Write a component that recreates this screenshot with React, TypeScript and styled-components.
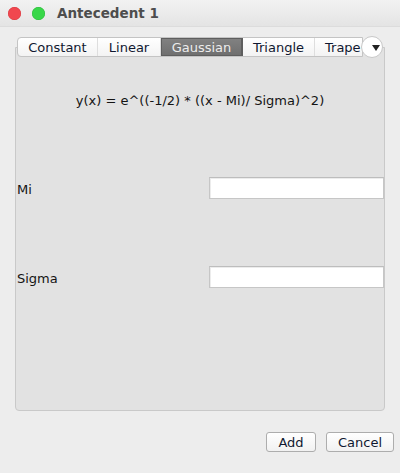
import React from "react";
import styled, { createGlobalStyle } from "styled-components";

const Global = createGlobalStyle`
  html, body { margin: 0; padding: 0; background: #ededed; }
  body { font-family: "DejaVu Sans", "Liberation Sans", sans-serif; }
  * { box-sizing: border-box; }
`;

const Window = styled.div`
  width: 400px;
  height: 473px;
  background: #ededed;
  display: flex;
  flex-direction: column;
  overflow: hidden;
`;

const TitleBar = styled.div`
  height: 27px;
  flex: none;
  display: flex;
  align-items: center;
  padding-left: 8px;
  gap: 11px;
  background: linear-gradient(#f2f2f2, #e4e4e4);
  border-bottom: 1px solid #dcdcdc;
`;

const Light = styled.span<{ $color: string; $edge: string }>`
  width: 13px;
  height: 13px;
  border-radius: 50%;
  background: ${(p) => p.$color};
  box-shadow: inset 0 0 0 0.5px ${(p) => p.$edge};
  flex: none;
`;

const Title = styled.div`
  margin-left: 1px;
  font-size: 13.5px;
  font-weight: bold;
  color: #4d4d4d;
`;

const Body = styled.div`
  flex: 1;
  display: flex;
  flex-direction: column;
  padding: 9px 15px 0 15px;
`;

const TabRow = styled.div`
  position: relative;
  z-index: 1;
  display: flex;
  align-items: center;
  height: 22px;
  margin-left: 2px;
  width: 368px;
`;

const Tabs = styled.div`
  display: flex;
  width: 346px;
  overflow: hidden;
  height: 20px;
  border: 1px solid #c4c4c4;
  border-radius: 4px 0 0 4px;
  background: linear-gradient(#ffffff, #f3f3f3);
`;

const Tab = styled.div<{ $active?: boolean; $w: number }>`
  flex: none;
  width: ${(p) => p.$w}px;
  height: 100%;
  display: flex;
  align-items: center;
  justify-content: center;
  white-space: nowrap;
  font-size: 13px;
  color: ${(p) => (p.$active ? "#ececec" : "#101830")};
  background: ${(p) => (p.$active ? "linear-gradient(#828282, #6e6e6e)" : "transparent")};
  box-shadow: ${(p) => (p.$active ? "inset 0 0 0 1px #5e5e5e" : "none")};
  border-right: 1px solid ${(p) => (p.$active ? "#5e5e5e" : "#dedede")};
  &:last-child { border-right: none; justify-content: flex-start; padding-left: 10px; }
`;

const MoreButton = styled.div`
  flex: none;
  width: 22px;
  height: 22px;
  margin-left: -2px;
  border-radius: 50%;
  background: #ffffff;
  border: 1px solid #c8c8c8;
  display: flex;
  align-items: center;
  justify-content: flex-end;
  padding-right: 2px;
  padding-top: 2px;
`;

const Panel = styled.div`
  margin-top: -11px;
  height: 364px;
  width: 370px;
  background: #e2e2e2;
  border: 1px solid #c9c9c9;
  border-radius: 0 0 4px 4px;
  display: flex;
  flex-direction: column;
  padding: 45px 0 0 1px;
`;

const Formula = styled.div`
  text-align: center;
  font-size: 13px;
  line-height: 16px;
  color: #141414;
  padding-right: 1px;
`;

const FieldRow = styled.div<{ $top: number }>`
  margin-top: ${(p) => p.$top}px;
  display: flex;
  align-items: center;
  justify-content: space-between;
  height: 22px;
`;

const Label = styled.span`
  font-size: 13px;
  color: #141414;
  padding-top: 2px;
`;

const Field = styled.input`
  width: 175px;
  height: 22px;
  border: 1px solid #c6c6c6;
  border-top-color: #bdbdbd;
  background: #ffffff;
  box-shadow: inset 1px 1px 0 #ececec;
  padding: 0 4px;
  font-family: inherit;
  font-size: 13px;
  outline: none;
`;

const Footer = styled.div`
  display: flex;
  justify-content: flex-end;
  gap: 10px;
  margin-top: 21px;
  padding-right: 6px;
  margin-right: -15px;
`;

const Button = styled.button<{ $w: number }>`
  width: ${(p) => p.$w}px;
  height: 20px;
  padding: 0;
  border: 1px solid #adadad;
  border-radius: 3px;
  background: linear-gradient(#ffffff, #f1f1f1);
  font-family: "DejaVu Sans", sans-serif;
  font-size: 13px;
  color: #101830;
  display: flex;
  align-items: center;
  justify-content: center;
`;

export default function App() {
  return (
    <Window>
      <Global />
      <TitleBar>
        <Light $color="#f1474f" $edge="#d8383f" />
        <Light $color="#38d749" $edge="#2bb83a" />
        <Title>Antecedent 1</Title>
      </TitleBar>
      <Body>
        <TabRow>
          <Tabs>
            <Tab $w={80}>Constant</Tab>
            <Tab $w={63}>Linear</Tab>
            <Tab $w={82} $active>Gaussian</Tab>
            <Tab $w={72}>Triangle</Tab>
            <Tab $w={49}>Trape</Tab>
          </Tabs>
          <MoreButton>
            <svg width="8" height="6" viewBox="0 0 8 6">
              <path d="M0 0 L8 0 L4 6 Z" fill="#222" />
            </svg>
          </MoreButton>
        </TabRow>
        <Panel>
          <Formula>y(x) = e^((-1/2) * ((x - Mi)/ Sigma)^2)</Formula>
          <FieldRow $top={68}>
            <Label>Mi</Label>
            <Field />
          </FieldRow>
          <FieldRow $top={67}>
            <Label>Sigma</Label>
            <Field />
          </FieldRow>
        </Panel>
        <Footer>
          <Button $w={50}>Add</Button>
          <Button $w={68}>Cancel</Button>
        </Footer>
      </Body>
    </Window>
  );
}
